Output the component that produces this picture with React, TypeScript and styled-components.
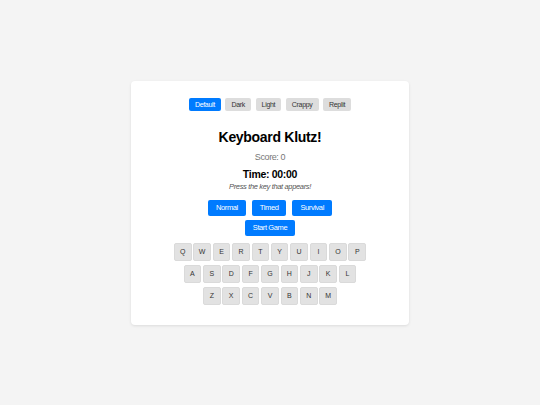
import React, { useState } from "react";
import styled, { createGlobalStyle } from "styled-components";

const GlobalStyle = createGlobalStyle`
  html, body {
    margin: 0;
    padding: 0;
    background: #f4f4f4;
    font-family: "Liberation Sans", Arial, Helvetica, sans-serif;
  }
`;

const Page = styled.div`
  height: 405px;
  display: flex;
  align-items: center;
  justify-content: center;
`;

const Card = styled.div`
  width: 278px;
  box-sizing: border-box;
  padding: 17px 0 20px;
  background: #fff;
  border-radius: 4px;
  box-shadow: 0 1px 3px rgba(0, 0, 0, 0.1);
  display: flex;
  flex-direction: column;
  align-items: center;
`;

const ThemeBar = styled.div`
  display: flex;
  gap: 4.5px;
`;

const ThemeButton = styled.button<{ $active?: boolean }>`
  height: 13px;
  padding: 0 6px;
  border: none;
  border-radius: 2px;
  font-family: inherit;
  font-size: 7px;
  letter-spacing: -0.3px;
  line-height: 13px;
  background: ${(p) => (p.$active ? "#007bff" : "#dddddd")};
  color: ${(p) => (p.$active ? "#fff" : "#333")};
  cursor: pointer;
`;

const Title = styled.h1`
  margin: 17px 0 0;
  font-size: 14px;
  letter-spacing: -0.3px;
  line-height: 18px;
  font-weight: 700;
  color: #000;
`;

const Score = styled.div`
  margin-top: 5px;
  font-size: 9px;
  letter-spacing: -0.4px;
  line-height: 12px;
  color: #777;
`;

const Timer = styled.h2`
  margin: 4px 0 0;
  font-size: 10.5px;
  letter-spacing: -0.3px;
  line-height: 14px;
  font-weight: 700;
  color: #000;
`;

const Hint = styled.p`
  margin: 1.5px 0 0;
  font-size: 7.5px;
  letter-spacing: -0.35px;
  line-height: 10px;
  font-style: italic;
  color: #555;
`;

const ModeRow = styled.div`
  display: flex;
  gap: 6px;
  margin-top: 7.5px;
`;

const BlueButton = styled.button`
  height: 16px;
  padding: 0 8px;
  border: none;
  border-radius: 2px;
  background: #007bff;
  color: #fff;
  font-family: inherit;
  font-size: 7.5px;
  letter-spacing: -0.4px;
  line-height: 16px;
  cursor: pointer;
`;

const StartButton = styled(BlueButton)`
  margin-top: 4px;
`;

const Keyboard = styled.div`
  margin-top: 7px;
  display: flex;
  flex-direction: column;
  align-items: center;
  gap: 4px;
`;

const KeyRow = styled.div`
  display: flex;
  gap: 1.8px;
`;

const Key = styled.div`
  width: 17.6px;
  height: 18px;
  box-sizing: border-box;
  border: 1px solid #dadada;
  border-radius: 2px;
  background: #e2e2e2;
  color: #333;
  font-size: 7px;
  display: flex;
  align-items: center;
  justify-content: center;
`;

const themes = ["Default", "Dark", "Light", "Crappy", "Replit"];
const modes = ["Normal", "Timed", "Survival"];
const rows = ["QWERTYUIOP", "ASDFGHJKL", "ZXCVBNM"];

export default function App() {
  const [theme, setTheme] = useState("Default");
  return (
    <>
      <GlobalStyle />
      <Page>
        <Card>
          <ThemeBar>
            {themes.map((t) => (
              <ThemeButton key={t} $active={t === theme} onClick={() => setTheme(t)}>
                {t}
              </ThemeButton>
            ))}
          </ThemeBar>
          <Title>Keyboard Klutz!</Title>
          <Score>Score: 0</Score>
          <Timer>Time: 00:00</Timer>
          <Hint>Press the key that appears!</Hint>
          <ModeRow>
            {modes.map((m) => (
              <BlueButton key={m}>{m}</BlueButton>
            ))}
          </ModeRow>
          <StartButton>Start Game</StartButton>
          <Keyboard>
            {rows.map((r) => (
              <KeyRow key={r}>
                {r.split("").map((k) => (
                  <Key key={k}>{k}</Key>
                ))}
              </KeyRow>
            ))}
          </Keyboard>
        </Card>
      </Page>
    </>
  );
}
